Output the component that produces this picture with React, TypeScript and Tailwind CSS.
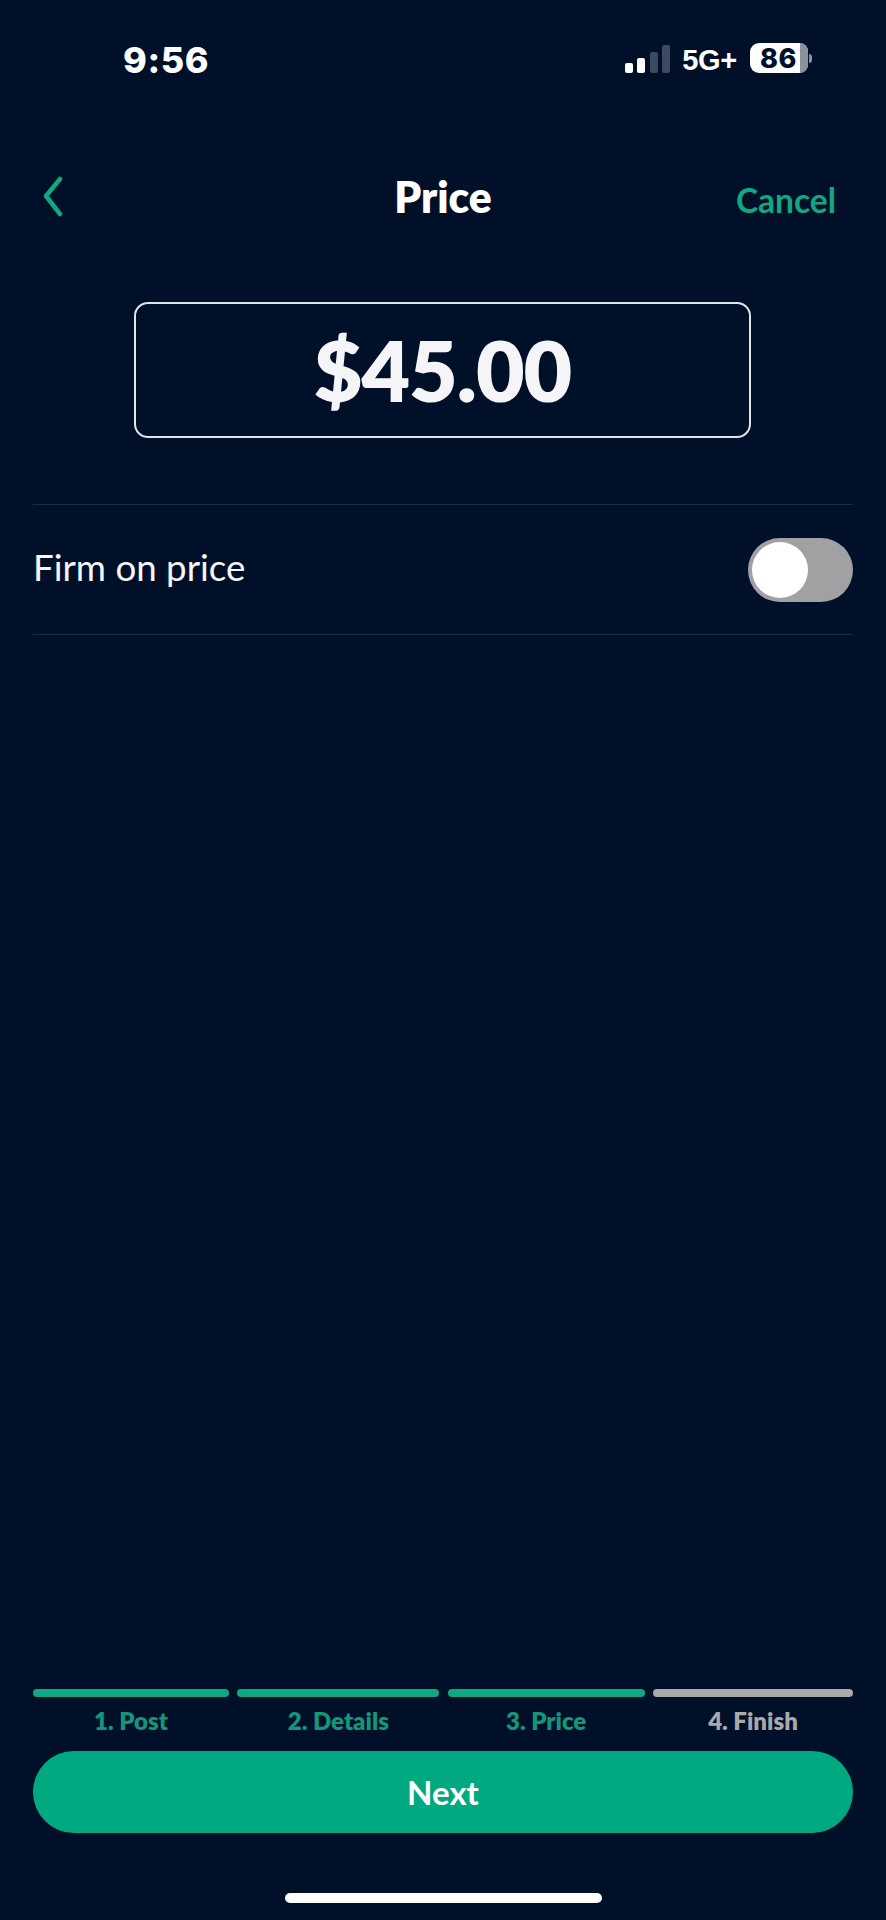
export default function App() {
  const steps = [
    { label: "1. Post", w: "w-[196px]", bar: "bg-[#0fa880]", text: "text-[#14967a]" },
    { label: "2. Details", w: "w-[202px]", bar: "bg-[#0fa880]", text: "text-[#14967a]" },
    { label: "3. Price", w: "w-[197px]", bar: "bg-[#0fa880]", text: "text-[#14967a]" },
    { label: "4. Finish", w: "w-[200px]", bar: "bg-[#a9a8aa]", text: "text-[#a9a8aa]" },
  ];
  return (
    <div className="w-[886px] h-[1920px] bg-[#001029] flex flex-col font-['Lato','Noto_Sans',sans-serif] text-white overflow-hidden">
      <div className="h-[156px] pt-[38px] pl-[123px] pr-[74px] flex justify-between items-start shrink-0">
        <span className="font-['Inter',sans-serif] font-extrabold text-[36px] leading-[44px] tracking-[0.6px]">9:56</span>
        <div className="flex items-center h-[44px] mt-[-2px]">
          <div className="flex items-end gap-[4.5px] h-[29px] mt-[1px]">
            <span className="w-[8px] h-[10px] rounded-[2px] bg-white" />
            <span className="w-[8px] h-[15px] rounded-[2px] bg-white" />
            <span className="w-[8px] h-[21px] rounded-[2px] bg-[#3c4a60]" />
            <span className="w-[8px] h-[28px] rounded-[2px] bg-[#3c4a60]" />
          </div>
          <span className="ml-[12px] mt-[3px] font-['Liberation_Sans',sans-serif] font-bold text-[29px] leading-[32px] tracking-[-0.3px]">5G+</span>
          <div className="ml-[13px] relative w-[58px] h-[30px] rounded-[9px] bg-white flex items-center pl-[10px]">
            <span className="mt-[2px] font-['Inter',sans-serif] font-extrabold text-[#001029] text-[27px] leading-[30px] tracking-[0.5px]">86</span>
            <span className="absolute right-0 top-0 bottom-0 w-[8px] rounded-r-[9px] bg-[#8b919c]" />
          </div>
          <span className="ml-[1px] w-[3px] h-[9px] rounded-r-[3px] bg-[#8b919c]" />
        </div>
      </div>

      <div className="relative h-[76px] flex items-center justify-center shrink-0">
        <svg className="absolute left-[40px] top-[20px]" width="24" height="42" viewBox="0 0 24 42" fill="none">
          <path d="M20 3 L6 20 L20 38" stroke="#0fa880" strokeWidth="4.5" strokeLinecap="round" strokeLinejoin="round" />
        </svg>
        <span className="mt-[5px] font-extrabold text-[42.5px] leading-[48px]">Price</span>
        <span className="absolute right-[50px] top-[22px] font-bold text-[33.5px] leading-[44px] text-[#0fa880]">Cancel</span>
      </div>

      <div className="mt-[70px] mx-[134px] h-[136px] w-[617px] shrink-0 rounded-[14px] border-2 border-[#dfe3ea] flex items-center justify-center">
        <span className="font-extrabold text-[84px] leading-[100px] text-[#f5f5f7] tracking-[-1px]">$45.00</span>
      </div>

      <div className="mt-[66px] mx-[33px] h-[131px] shrink-0 border-y border-[#1c2a42] flex items-center justify-between">
        <span className="text-[36.7px] leading-[44px] mt-[-6px] text-[#f5f6f8]">Firm on price</span>
        <div className="relative w-[105px] h-[64px] rounded-full bg-[#a1a0a3]">
          <span className="absolute left-[4px] top-[4px] w-[56px] h-[56px] rounded-full bg-white" />
        </div>
      </div>

      <div className="flex-1" />

      <div className="mx-[33px] flex justify-between shrink-0">
        {steps.map((s) => (
          <div key={s.label} className={`${s.w} flex flex-col items-center`}>
            <span className={`h-[8px] w-full rounded-full ${s.bar}`} />
            <span className={`mt-[9px] font-extrabold text-[24px] leading-[30px] ${s.text}`}>{s.label}</span>
          </div>
        ))}
      </div>

      <div className="mt-[15px] mx-[33px] h-[82px] shrink-0 rounded-[41px] bg-[#00a97f] flex items-center justify-center">
        <span className="font-bold text-[33px] leading-[40px]">Next</span>
      </div>

      <div className="mt-[60px] mb-[17px] mx-auto w-[317px] h-[10px] shrink-0 rounded-full bg-white" />
    </div>
  );
}
